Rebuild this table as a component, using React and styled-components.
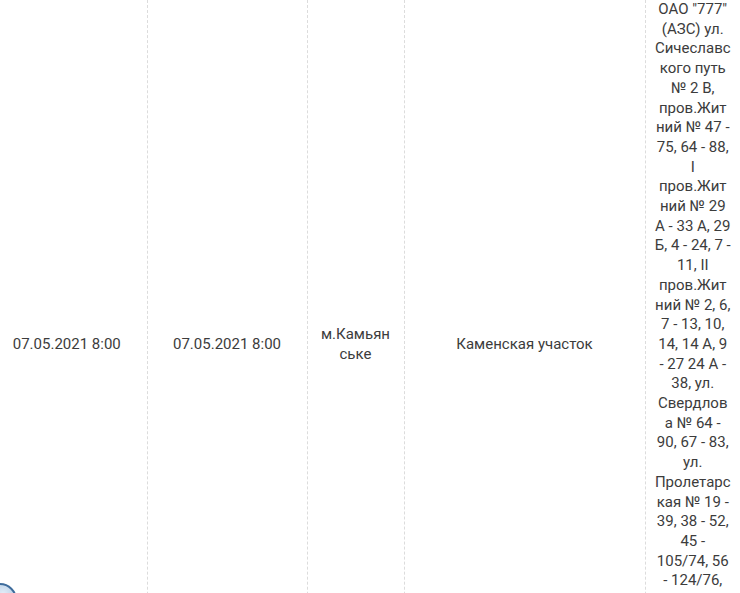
import styled, { createGlobalStyle } from 'styled-components';

const GlobalStyle = createGlobalStyle`
	html, body {
		margin: 0;
		padding: 0;
		background: #fff;
		overflow: hidden;
	}
	body {
		font-family: Roboto, "Liberation Sans", Arial, sans-serif;
		color: #3c3c3c;
	}
`;

const Page = styled.div`
	width: 740px;
	height: 593px;
	overflow: hidden;
`;

const Table = styled.table`
	margin-left: -13px;
	border-collapse: collapse;
	table-layout: fixed;
	width: 753px;
	font-size: 15px;
	line-height: 19.7px;
`;

const Col = styled.col`
	width: ${(p) => p.$w}px;
`;

const Cell = styled.td`
	padding: 0 ${(p) => p.$pad ?? 10}px;
	text-align: center;
	vertical-align: middle;
	border-left: 1px dashed #dcdcdc;
	word-wrap: break-word;
	overflow-wrap: break-word;

	&:first-child {
		border-left: none;
	}
`;

const Line = styled.span`
	display: block;
	white-space: nowrap;
`;

const FloatButton = styled.div`
	position: fixed;
	left: -17px;
	bottom: -24px;
	width: 30px;
	height: 30px;
	border-radius: 50%;
	background: radial-gradient(circle at 60% 30%, #e4eef8, #a9c4e0 65%);
	border: 2px solid #3e6c9c;
`;

// address wrapped the way the narrow column breaks it
const addressLines = [
	'ОАО "777"',
	'(АЗС) ул.',
	'Сичеславс',
	'кого путь',
	'№ 2 В,',
	'пров.Жит',
	'ний № 47 -',
	'75, 64 - 88,',
	'I',
	'пров.Жит',
	'ний № 29',
	'А - 33 А, 29',
	'Б, 4 - 24, 7 -',
	'11, II',
	'пров.Жит',
	'ний № 2, 6,',
	'7 - 13, 10,',
	'14, 14 А, 9',
	'- 27 24 А -',
	'38, ул.',
	'Свердлов',
	'а № 64 -',
	'90, 67 - 83,',
	'ул.',
	'Пролетарс',
	'кая № 19 -',
	'39, 38 - 52,',
	'45 -',
	'105/74, 56',
	'- 124/76,',
	'ул. Лесная',
	'№ 1 - 17, 2 -',
	'22, ул.',
	'Садовая №',
	'3 - 15',
];

const App = () => {
	return (
		<Page>
			<GlobalStyle />
			<Table>
				<colgroup>
					<Col $w={160} />
					<Col $w={160} />
					<Col $w={97} />
					<Col $w={241} />
					<Col $w={95} />
				</colgroup>
				<tbody>
					<tr>
						<Cell>07.05.2021 8:00</Cell>
						<Cell>07.05.2021 8:00</Cell>
						<Cell $pad={12}>м.Камьянське</Cell>
						<Cell>Каменская участок</Cell>
						<Cell $pad={4}>
							{addressLines.map((l, i) => (
								<Line key={i}>{l}</Line>
							))}
						</Cell>
					</tr>
				</tbody>
			</Table>
			<FloatButton />
		</Page>
	);
};

export default App;
